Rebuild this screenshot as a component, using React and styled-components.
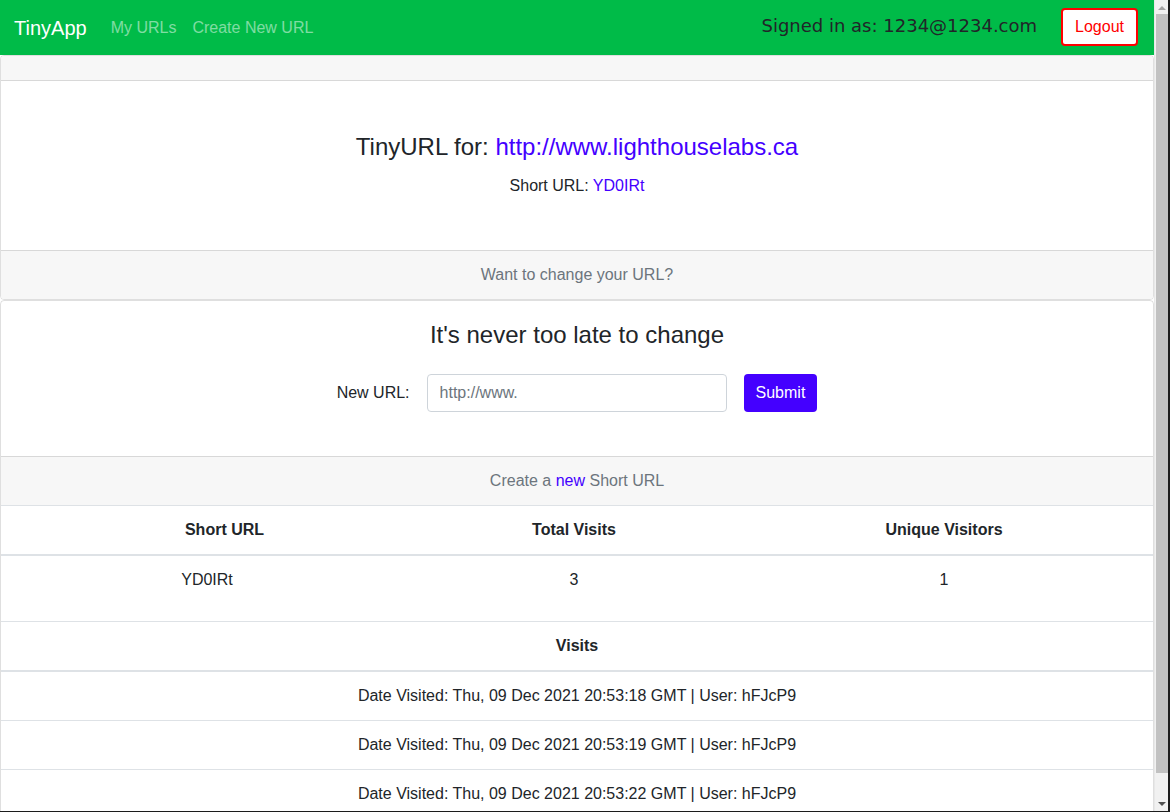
import React from "react";
import styled, { createGlobalStyle } from "styled-components";

const GlobalStyle = createGlobalStyle`
  body {
    margin: 0;
    font-family: "Liberation Sans", Arial, sans-serif;
    font-size: 16px;
    line-height: 1.5;
    color: #212529;
    background: #fff;
    overflow: hidden;
  }
  * {
    box-sizing: border-box;
  }
`;

const visits = [
  "Thu, 09 Dec 2021 20:53:18 GMT",
  "Thu, 09 Dec 2021 20:53:19 GMT",
  "Thu, 09 Dec 2021 20:53:22 GMT",
];

export default function App() {
  return (
    <Frame>
      <GlobalStyle />
      <Main>
        <Navbar>
          <Brand>TinyApp</Brand>
          <NavLink>My URLs</NavLink>
          <NavLink>Create New URL</NavLink>
          <NavRight>
            <SignedIn>Signed in as: 1234@1234.com</SignedIn>
            <LogoutButton>Logout</LogoutButton>
          </NavRight>
        </Navbar>

        <Card>
          <CardHeader />
          <IntroBody>
            <Heading $gap={12}>
              TinyURL for: <Link>http://www.lighthouselabs.ca</Link>
            </Heading>
            <ShortLine>
              Short URL: <Link>YD0IRt</Link>
            </ShortLine>
          </IntroBody>
          <CardFooter>Want to change your URL?</CardFooter>
        </Card>

        <Card>
          <EditBody>
            <Heading $gap={24}>It's never too late to change</Heading>
            <EditForm>
              <Label>New URL:</Label>
              <UrlInput placeholder="http://www." />
              <SubmitButton>Submit</SubmitButton>
            </EditForm>
          </EditBody>
          <CardFooter>
            Create a <Link>new</Link> Short URL
          </CardFooter>
          <Table>
            <colgroup>
              <col style={{ width: 412 }} />
              <col style={{ width: 322 }} />
              <col />
            </colgroup>
            <thead>
              <tr>
                <HeadCell $shift={35}>Short URL</HeadCell>
                <HeadCell>Total Visits</HeadCell>
                <HeadCell>Unique Visitors</HeadCell>
              </tr>
            </thead>
            <tbody>
              <tr>
                <StatCell>YD0IRt</StatCell>
                <StatCell>3</StatCell>
                <StatCell>1</StatCell>
              </tr>
              <tr>
                <HeadCell colSpan={3}>Visits</HeadCell>
              </tr>
              {visits.map((v) => (
                <tr key={v}>
                  <VisitCell colSpan={3}>
                    Date Visited: {v} | User: hFJcP9
                  </VisitCell>
                </tr>
              ))}
            </tbody>
          </Table>
        </Card>
      </Main>

      <Scrollbar>
        <ScrollArrow>
          <svg width="8" height="5" viewBox="0 0 8 5">
            <path d="M0 5 L4 1 L8 5 Z" fill="#a3a3a3" />
          </svg>
        </ScrollArrow>
        <Track>
          <Thumb />
        </Track>
        <ScrollArrow>
          <svg width="8" height="5" viewBox="0 0 8 5">
            <path d="M0 0 L8 0 L4 4 Z" fill="#505050" />
          </svg>
        </ScrollArrow>
      </Scrollbar>
    </Frame>
  );
}

const Frame = styled.div`
  display: flex;
  height: 812px;
  border-right: 2px solid #1c1c1c;
  border-bottom: 1px solid #1c1c1c;
  overflow: hidden;
`;

const Main = styled.div`
  flex: 1;
  min-width: 0;
  overflow: hidden;
`;

const Scrollbar = styled.aside`
  width: 14px;
  flex-shrink: 0;
  display: flex;
  flex-direction: column;
  background: #f1f1f1;
  border-left: 1px solid #e8e8e8;
`;

const ScrollArrow = styled.div`
  height: 14px;
  display: flex;
  align-items: center;
  justify-content: center;
`;

const Track = styled.div`
  flex: 1;
  padding: 0 0 24px 1px;
`;

const Thumb = styled.div`
  height: 100%;
  background: #c1c1c1;
`;

const Navbar = styled.nav`
  display: flex;
  align-items: center;
  height: 55px;
  padding: 0 16px 0 14px;
  background: #00bb48;
`;

const Brand = styled.a`
  font-size: 20px;
  color: #fff;
  margin-right: 16px;
`;

const NavLink = styled.a`
  padding: 0 8px;
  color: rgba(255, 255, 255, 0.5);
`;

const NavRight = styled.div`
  margin-left: auto;
  display: flex;
  align-items: center;
  gap: 24px;
`;

const SignedIn = styled.span`
  font-family: "DejaVu Sans", sans-serif;
  font-size: 18px;
  color: #212529;
  margin-top: -4px;
`;

const LogoutButton = styled.button`
  height: 38px;
  margin-top: -1px;
  padding: 0 12px;
  border: 2px solid #ff0000;
  border-radius: 4px;
  background: #fff;
  color: #ff0000;
  font-family: "Liberation Sans", Arial, sans-serif;
  font-size: 16px;
`;

const Card = styled.section`
  border: 1px solid rgba(0, 0, 0, 0.125);
  border-radius: 4px;
  overflow: hidden;
`;

const CardHeader = styled.div`
  height: 25px;
  background: #f7f7f7;
  border-bottom: 1px solid rgba(0, 0, 0, 0.125);
`;

const CardFooter = styled.div`
  padding: 12px 20px;
  text-align: center;
  color: #6c757d;
  background: #f7f7f7;
  border-top: 1px solid rgba(0, 0, 0, 0.125);
`;

const IntroBody = styled.div`
  padding: 52px 20px 52px;
  text-align: center;
`;

const EditBody = styled.div`
  padding: 20px 20px 20px;
  text-align: center;
`;

const Heading = styled.h4`
  margin: 0 0 ${(p) => p.$gap}px;
  font-size: 24px;
  font-weight: 400;
  line-height: 1.2;
`;

const ShortLine = styled.p`
  margin: 0;
`;

const Link = styled.a`
  color: #4400ff;
`;

const EditForm = styled.form`
  display: flex;
  justify-content: center;
  align-items: center;
  gap: 17px;
  margin-bottom: 24px;
`;

const Label = styled.label`
  font-size: 16px;
`;

const UrlInput = styled.input`
  width: 300px;
  height: 38px;
  padding: 6px 12px;
  border: 1px solid #ced4da;
  border-radius: 4px;
  font-family: "Liberation Sans", Arial, sans-serif;
  font-size: 16px;
  color: #495057;
  &::placeholder {
    color: #6c757d;
  }
`;

const SubmitButton = styled.button`
  height: 38px;
  padding: 0 12px;
  border: none;
  border-radius: 4px;
  background: #4400ff;
  color: #fff;
  font-family: "Liberation Sans", Arial, sans-serif;
  font-size: 16px;
`;

const Table = styled.table`
  width: 100%;
  border-collapse: collapse;
  table-layout: fixed;
`;

const HeadCell = styled.th`
  padding: 12px 12px 12px ${(p) => 12 + (p.$shift || 0)}px;
  text-align: center;
  font-weight: 700;
  border-top: 1px solid #dee2e6;
  border-bottom: 2px solid #dee2e6;
`;

const StatCell = styled.td`
  padding: 12px 12px 29px;
  text-align: center;
  vertical-align: top;
  border-top: 1px solid #dee2e6;
`;

const VisitCell = styled.td`
  padding: 12px;
  text-align: center;
  border-top: 1px solid #dee2e6;
`;
